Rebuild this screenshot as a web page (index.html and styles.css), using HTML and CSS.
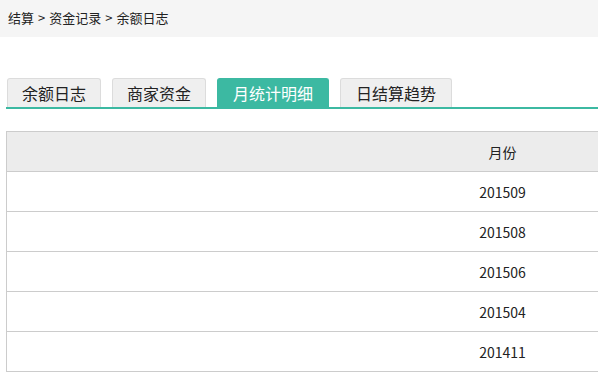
FILE: index.html
```html
<!DOCTYPE html>
<html lang="zh-CN">

<head>
    <meta charset="UTF-8">
    <meta name="viewport" content="width=device-width, initial-scale=1.0">
    <title>余额日志</title>
    <link rel="stylesheet" href="styles.css">
</head>

<body>
    <div class="crumbs">
        <span>结算</span><span class="sep">&gt;</span><span>资金记录</span><span class="sep">&gt;</span><span>余额日志</span>
    </div>

    <div class="main">
        <ul class="tabs">
            <li>余额日志</li>
            <li>商家资金</li>
            <li class="wide active">月统计明细</li>
            <li class="wide">日结算趋势</li>
        </ul>

        <table class="grid">
            <thead>
                <tr>
                    <th class="col-a"></th>
                    <th class="col-b">月份</th>
                </tr>
            </thead>
            <tbody>
                <tr><td></td><td>201509</td></tr>
                <tr><td></td><td>201508</td></tr>
                <tr><td></td><td>201506</td></tr>
                <tr><td></td><td>201504</td></tr>
                <tr><td></td><td>201411</td></tr>
            </tbody>
        </table>
    </div>
</body>

</html>
```

FILE: styles.css
```css
body {
    margin: 0;
    font-family: "Noto Sans CJK SC", "Noto Sans", sans-serif;
    color: #222;
    background-color: #fff;
    overflow: hidden;
}

.crumbs {
    height: 37px;
    line-height: 35px;
    padding-left: 8px;
    font-size: 13px;
    background-color: #f5f5f5;
}

.crumbs .sep {
    margin: 0 4px;
}

.main {
    padding: 41px 0 0 6px;
}

.tabs {
    list-style: none;
    margin: 0;
    padding: 0 0 0 1px;
    display: flex;
    gap: 11px;
    border-bottom: 2px solid #3cb9a2;
}

.tabs li {
    height: 28px;
    line-height: 28px;
    padding: 0 14px;
    font-size: 16px;
    background-color: #efefef;
    border: 1px solid #dcdcdc;
    border-bottom: none;
    border-radius: 3px 3px 0 0;
    cursor: pointer;
}

.tabs li.wide {
    padding: 0 15px;
}

.tabs li.active {
    background-color: #3cb9a2;
    border-color: #3cb9a2;
    color: #fff;
}

.grid {
    margin-top: 22px;
    width: 100%;
    border-collapse: collapse;
    table-layout: fixed;
    font-size: 14px;
}

.grid th,
.grid td {
    height: 39px;
    padding: 0;
    line-height: 20px;
    text-align: center;
    border-top: 1px solid #ccc;
    border-bottom: 1px solid #ccc;
}

.grid th {
    font-weight: normal;
    background-color: #ececec;
}

.grid tr > :first-child {
    border-left: 1px solid #ccc;
}

.col-a {
    width: 400px;
}
```
